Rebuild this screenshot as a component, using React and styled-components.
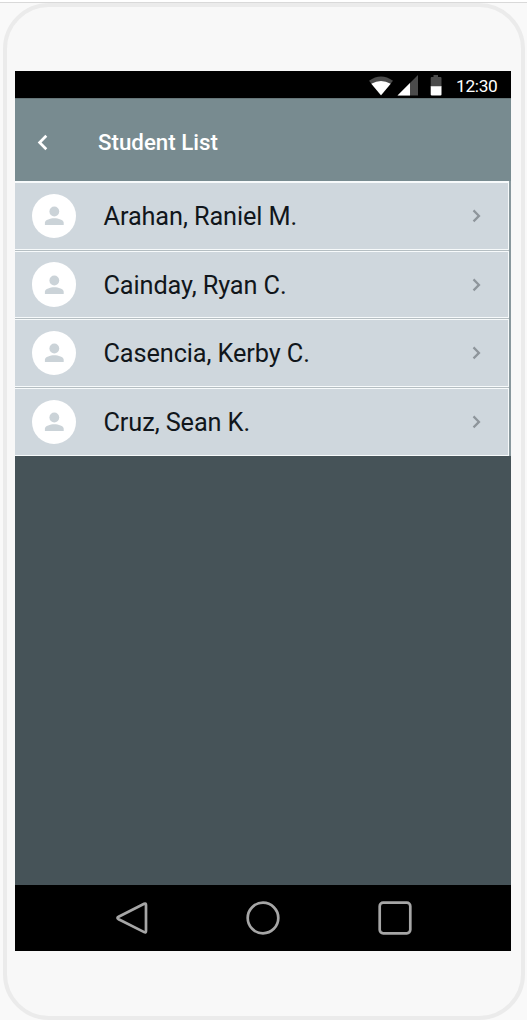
import React from "react";
import styled, { createGlobalStyle } from "styled-components";

const GlobalStyle = createGlobalStyle`
  * { box-sizing: border-box; }
  body { margin: 0; background: #f9f9f9; font-family: Roboto, "Liberation Sans", sans-serif; }
`;

const Page = styled.div`
  width: 527px;
  height: 1020px;
  overflow: hidden;
  background: #f9f9f9;
  border-top: 2px solid #fff;
  padding-left: 3px;
  box-shadow: inset 0 1px 0 #d9d9d9;
`;

const Phone = styled.div`
  width: 522px;
  height: 1017px;
  margin-top: 1px;
  border: 4px solid #ebebeb;
  border-radius: 46px;
  background: #f8f8f8;
  padding: 64px 0 0 8px;
`;

const Screen = styled.main`
  width: 496px;
  height: 880px;
  display: flex;
  flex-direction: column;
  background: #465358;
`;

const StatusBar = styled.div`
  height: 27px;
  display: flex;
  align-items: center;
  justify-content: flex-end;
  padding: 2px 13px 0 0;
  background: #000;
  color: #fff;
`;

const Clock = styled.time`
  margin-left: 13px;
  font-size: 17.3px;
  line-height: 20px;
  font-weight: 400;
  letter-spacing: -0.3px;
  width: 42px;
  white-space: nowrap;
`;

const Header = styled.header`
  height: 83px;
  display: flex;
  align-items: center;
  padding: 5px 0 0 22px;
  background: #788b90;
  border-top: 1px solid #667679;
  color: #fff;
`;

const Title = styled.h1`
  margin: 0 0 0 50px;
  padding-bottom: 2px;
  font-size: 22.3px;
  line-height: 26px;
  font-weight: 500;
`;

const List = styled.ul`
  margin: 0;
  padding: 0 2px 0 0;
  list-style: none;
  display: flex;
  flex-direction: column;
  gap: 1px;
  background: linear-gradient(to right, #b5bec2 494px, #89989d 494px);
`;

const Row = styled.li`
  height: ${(p) => p.$height}px;
  display: flex;
  align-items: center;
  padding: 0 26.5px 0 16.5px;
  background: #cfd7dd;
  border: solid #f7fafb;
  border-width: ${(p) => p.$top || 1}px 1px 1px 0;
  color: #11161b;
`;

const Avatar = styled.span`
  width: 44.5px;
  height: 44.5px;
  flex: none;
  display: flex;
  align-items: center;
  justify-content: center;
  border-radius: 50%;
  background: #fff;
`;

const Name = styled.span`
  flex: 1;
  margin-left: 27.5px;
  padding-top: 2px;
  font-size: 25.3px;
  letter-spacing: -0.1px;
  line-height: 32px;
  white-space: nowrap;
`;

const Body = styled.div`
  flex: 1;
`;

const NavBar = styled.nav`
  height: 66px;
  display: flex;
  align-items: center;
  gap: 96px;
  padding-left: 98px;
  background: #000;
`;

const Icon = styled.svg`
  display: block;
  flex: none;
  fill: none;
`;

const students = [
  { name: "Arahan, Raniel M.", height: 69, top: 2 },
  { name: "Cainday, Ryan C.", height: 67 },
  { name: "Casencia, Kerby C.", height: 68 },
  { name: "Cruz, Sean K.", height: 68 },
];

const StatusIcons = () => (
  <Icon width="74" height="22" viewBox="0 0 74 22">
    <path d="M0 5.8Q12 -2.8 24 5.8L12 20.5Z" fill="#4b4b4b" />
    <path d="M2.3 8.7Q12 3.4 21.7 8.7L12 20.2Z" fill="#fff" />
    <path d="M49 0V20.5H28.5Z" fill="#4b4b4b" />
    <path d="M41 8V20.5H28.5Z" fill="#fff" />
    <path d="M64.5 0H69V2H71.5Q72.5 2 72.5 3.2V12H61.7V3.2Q61.7 2 62.7 2H64.5Z" fill="#4b4b4b" />
    <path d="M61.7 11.3H72.5V19.5Q72.5 20.6 71.4 20.6H62.8Q61.7 20.6 61.7 19.5Z" fill="#fff" />
  </Icon>
);

const Person = () => (
  <Icon width="20" height="20" viewBox="0 0 20 20">
    <circle cx="10.3" cy="5.5" r="4.9" fill="#cbd3d8" />
    <path d="M.9 19V16.8C.9 13.7 6.3 12.2 10.3 12.2S19.7 13.7 19.7 16.8V19Z" fill="#cbd3d8" />
  </Icon>
);

export default function App() {
  return (
    <>
      <GlobalStyle />
      <Page>
        <Phone>
          <Screen>
            <StatusBar>
              <StatusIcons />
              <Clock>12:30</Clock>
            </StatusBar>
            <Header>
              <Icon width="11" height="18" viewBox="0 0 11 18" stroke="#fff" strokeWidth="2.7">
                <path d="M9.3 1.7L2.6 8.5L9.3 15.3" />
              </Icon>
              <Title>Student List</Title>
            </Header>
            <List>
              {students.map((s) => (
                <Row key={s.name} $height={s.height} $top={s.top}>
                  <Avatar><Person /></Avatar>
                  <Name>{s.name}</Name>
                  <Icon width="10" height="14" viewBox="0 0 10 14" stroke="#8e959b" strokeWidth="2.2">
                    <path d="M1.5 1.4L7 6.9L1.5 12.4" />
                  </Icon>
                </Row>
              ))}
            </List>
            <Body />
            <NavBar>
              <Icon width="36" height="36" viewBox="0 0 36 36" stroke="#a6a6a6" strokeWidth="2.7">
                <path d="M5.6 16.8L31.2 3.8Q33 2.9 33 5V31Q33 33 31.2 32.1L5.6 19.2Q3.3 18 5.6 16.8Z" />
              </Icon>
              <Icon width="36" height="36" viewBox="0 0 36 36" stroke="#a6a6a6" strokeWidth="2.7">
                <circle cx="18" cy="18" r="15.3" />
              </Icon>
              <Icon width="36" height="36" viewBox="0 0 36 36" stroke="#a6a6a6" strokeWidth="2.7">
                <rect x="2.7" y="2.7" width="30.6" height="30.6" rx="3.5" />
              </Icon>
            </NavBar>
          </Screen>
        </Phone>
      </Page>
    </>
  );
}
